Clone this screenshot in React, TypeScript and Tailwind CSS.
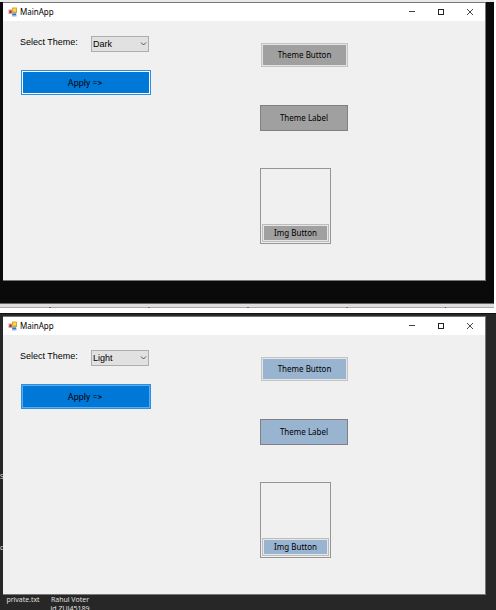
import { useState } from "react";

type Theme = "Dark" | "Light";

function AppIcon() {
  return (
    <svg width="10" height="10" viewBox="0 0 20 20" aria-hidden="true">
      <rect x="8" y="1" width="10" height="11" rx="1" fill="#d8a520" />
      <rect x="10" y="3" width="6" height="6" fill="#fbd84a" />
      <rect x="1" y="5" width="8" height="9" fill="#d9a49c" />
      <rect x="3" y="7" width="4" height="5" fill="#b3261c" />
      <rect x="8" y="13" width="9" height="6" fill="#8fb4ea" />
      <rect x="9" y="13" width="7" height="3" fill="#2f6fd8" />
    </svg>
  );
}

function TitleBar() {
  return (
    <header className="flex h-[18px] items-center bg-white pr-[1px] pl-[5px]">
      <AppIcon />
      <h1 className="ml-[2px] flex-1 font-['Noto_Sans',sans-serif] text-[8px] leading-[12px]">MainApp</h1>
      <button type="button" aria-label="Minimize" className="flex h-[18px] w-[29px] items-center justify-center">
        <svg width="8" height="8" viewBox="0 0 8 8" shapeRendering="crispEdges">
          <path d="M1 3.5H7" stroke="#444" fill="none" />
        </svg>
      </button>
      <button type="button" aria-label="Maximize" className="flex h-[18px] w-[29px] items-center justify-center">
        <svg width="8" height="8" viewBox="0 0 8 8" shapeRendering="crispEdges">
          <rect x="1.5" y="1.5" width="5" height="5" stroke="#222" fill="none" />
        </svg>
      </button>
      <button type="button" aria-label="Close" className="flex h-[18px] w-[29px] items-center justify-center">
        <svg width="8" height="8" viewBox="0 0 8 8">
          <path d="M1 1L7 7M7 1L1 7" stroke="#333" strokeWidth="0.9" fill="none" />
        </svg>
      </button>
    </header>
  );
}

function AppWindow({ initial, ring }: { initial: Theme; ring: string }) {
  const [choice, setChoice] = useState<Theme>(initial);
  const [theme, setTheme] = useState<Theme>(initial);
  const fill = theme === "Dark" ? "bg-[#a0a0a0]" : "bg-[#99b4d1]";
  const id = "theme-" + initial;
  return (
    <section className="border-y border-r border-[#777] bg-[#f0f0f0] text-black">
      <TitleBar />
      <div className="flex h-[259px]">
        <div className="w-[241px] shrink-0 pt-[15px] pl-[17px]">
          <div className="flex h-[16px] font-['Liberation_Sans',Arial,sans-serif]">
            <label htmlFor={id} className="w-[71px] text-[9px] leading-[12px] whitespace-nowrap">
              Select Theme:
            </label>
            <div className="relative">
              <select
                id={id}
                value={choice}
                onChange={(e) => setChoice(e.target.value as Theme)}
                className="block h-[16px] w-[58px] appearance-none border border-[#adadad] bg-[#e1e1e1] pl-[1px] text-[9px] leading-[14px]"
              >
                <option>Dark</option>
                <option>Light</option>
              </select>
              <svg className="pointer-events-none absolute top-[5px] right-[2px]" width="7" height="6" viewBox="0 0 7 6">
                <path d="M1 1.5L3.5 4L6 1.5" stroke="#444" strokeWidth="0.9" fill="none" />
              </svg>
            </div>
          </div>
          <button
            type="button"
            onClick={() => setTheme(choice)}
            className={`mt-[18px] ml-[1px] block h-[25px] w-[130px] border border-[#2b8fe0] bg-[#0078d7] pr-[2px] font-['Roboto',sans-serif] text-[9px] leading-[12px] ring-1 ring-inset ${ring}`}
          >
            Apply =&gt;
          </button>
        </div>
        <div className="flex flex-col items-start pt-[22px] pl-[16px] font-['Noto_Sans',sans-serif] text-[8px] leading-[12px]">
          <button
            type="button"
            className={`ml-[1px] h-[24px] w-[87px] border border-[#c4c4c4] ring-1 ring-[#e3e3e3] ring-inset ${fill}`}
          >
            Theme Button
          </button>
          <div className={`mt-[38px] flex h-[26px] w-[88px] items-center justify-center border border-[#808080] ${fill}`}>
            Theme Label
          </div>
          <div className="mt-[37px] flex h-[76px] w-[71px] flex-col justify-end border border-[#959595] p-[1px]">
            <button
              type="button"
              className={`h-[18px] w-full border border-[#bcbcbc] ring-1 ring-[#e6e6e6] ring-inset ${fill}`}
            >
              Img Button
            </button>
          </div>
        </div>
      </div>
    </section>
  );
}

export default function App() {
  return (
    <main className="flex h-screen flex-col overflow-hidden bg-white font-['Open_Sans','Noto_Sans',sans-serif]">
      <div className="mr-[2px] h-[303px] shrink-0 bg-[#0a0a0a]">
        <div className="h-[2px] bg-[#e8e8e8]" />
        <div className="mr-[8px] ml-[3px]">
          <AppWindow initial="Dark" ring="ring-white" />
        </div>
      </div>
      <div className="mr-[2px] h-[10px] shrink-0 border-t border-[#666] bg-white">
        <div className="h-[3px] bg-[#e0dcdf]" />
        <div className="flex h-[1px] justify-around bg-[#aaa]">
          <i className="w-[2px] bg-[#666]" />
          <i className="w-[2px] bg-[#777]" />
          <i className="w-[2px] bg-[#666]" />
          <i className="w-[2px] bg-[#777]" />
          <i className="w-[1px] bg-[#555]" />
        </div>
      </div>
      <div className="relative flex-1 overflow-hidden border-t border-[#111] bg-[#272727] pt-[2px] text-[7px] leading-[9px] text-[#e6e6e6]">
        <span className="absolute top-[158px] left-0">S</span>
        <span className="absolute top-[229px] left-0">c</span>
        <div className="mr-[10px] ml-[3px]">
          <AppWindow initial="Light" ring="ring-[#5eacec]" />
        </div>
        <div className="flex items-start gap-[9px] pl-[6px]">
          <span className="w-[34px] text-center whitespace-nowrap">private.txt</span>
          <span className="w-[42px] text-center whitespace-nowrap">
            Rahul Voter
            <br />
            id ZUI45189
          </span>
        </div>
      </div>
    </main>
  );
}
